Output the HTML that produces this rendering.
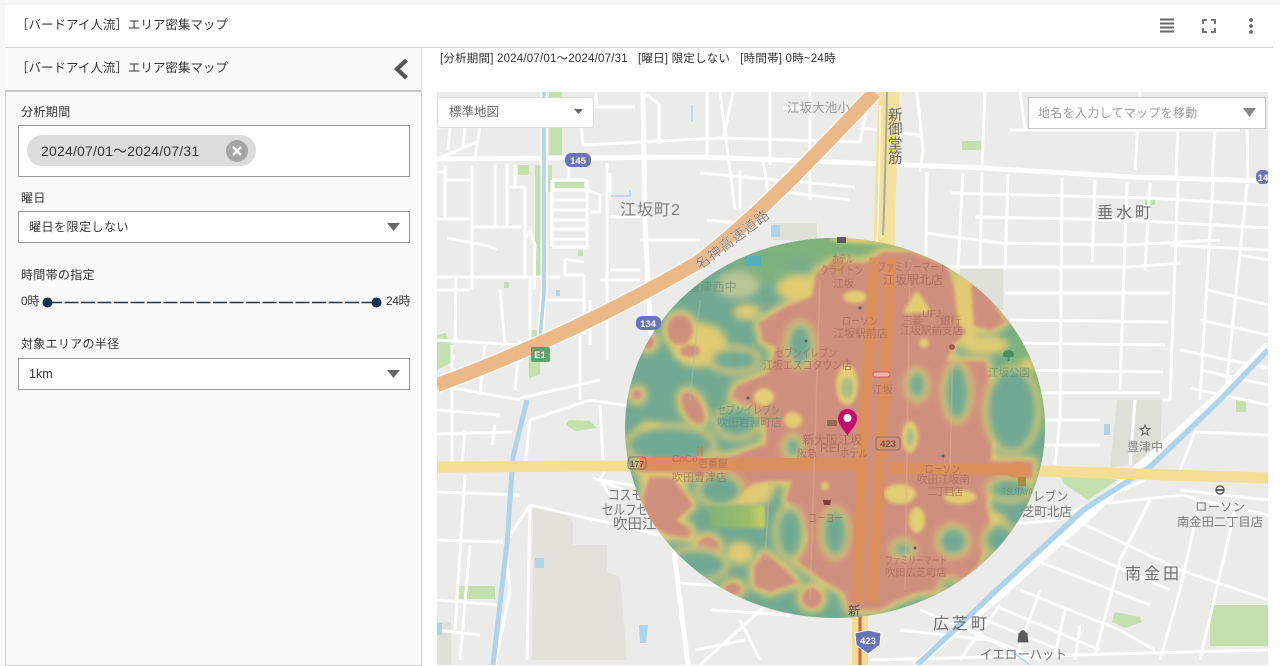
<!DOCTYPE html>
<html lang="ja"><head><meta charset="utf-8"><title>エリア密集マップ</title>
<style>
*{box-sizing:border-box}
html,body{margin:0;padding:0;width:1280px;height:666px;overflow:hidden;background:#fff;font-family:"Liberation Sans","Noto Sans CJK JP",sans-serif;color:#333}
.a{position:absolute}
.t{position:absolute;white-space:nowrap;line-height:16px}
.sel{position:absolute;left:18px;width:392px;background:#fff;border:1px solid #9a9a9a}
svg text{font-family:"Liberation Sans","Noto Sans CJK JP",sans-serif}
</style></head><body>
<div class="a" style="left:0;top:0;width:1280px;height:5px;background:#f6f6f6"></div>
<div class="a" style="left:0;top:5px;width:5px;height:661px;background:#f8f8f8"></div>
<div class="a" style="left:5px;top:47px;width:1268px;height:1px;background:#d2d2d2"></div>
<div class="t" style="left:16px;top:17px;font-size:12.500px;color:#333">［バードアイ人流］エリア密集マップ</div>
<!-- top icons -->
<svg class="a" style="left:1150px;top:10px" width="110" height="30" viewBox="1150 10 110 30">
<path d="M1160 19.500h14M1160 23.500h14M1160 27.500h14M1160 31.500h14" stroke="#666" stroke-width="2" fill="none"/>
<path d="M1203 24v-4h4M1211 20h4v4M1215 28v4h-4M1207 32h-4v-4" stroke="#666" stroke-width="1.800" fill="none"/>
<circle cx="1251" cy="20" r="1.900" fill="#666"/><circle cx="1251" cy="26" r="1.900" fill="#666"/><circle cx="1251" cy="32" r="1.900" fill="#666"/>
</svg>
<!-- left panel -->
<div class="a" style="left:5px;top:48px;width:416px;height:43px;background:#fafafa;border-bottom:1px solid #c8c8c8"></div>
<div class="a" style="left:5px;top:91px;width:417px;height:575px;background:#fafafa;border:1px solid #cfcfcf;border-top:1px solid #c8c8c8"></div>
<div class="a" style="left:421px;top:48px;width:1px;height:44px;background:#e2e2e2"></div>
<div class="t" style="left:16px;top:60px;font-size:12.500px">［バードアイ人流］エリア密集マップ</div>
<svg class="a" style="left:390px;top:55px" width="24" height="28"><path d="M16.500 5L7 14l9.500 9" stroke="#555" stroke-width="4.200" fill="none"/></svg>
<div class="t" style="left:21px;top:104px;font-size:12px;letter-spacing:.4px">分析期間</div>
<div class="sel" style="top:125px;height:52px"></div>
<div class="a" style="left:27px;top:135px;width:229px;height:31px;border-radius:16px;background:#dcdcdc"></div>
<div class="t" style="left:41px;top:143px;font-size:14px;color:#333;letter-spacing:.2px">2024/07/01～2024/07/31</div>
<svg class="a" style="left:226px;top:140px" width="22" height="22"><circle cx="11" cy="11" r="11" fill="#a5a5a5"/><path d="M7 7l8 8M15 7l-8 8" stroke="#fff" stroke-width="2.400"/></svg>
<div class="t" style="left:21px;top:190px;font-size:12px;letter-spacing:.4px">曜日</div>
<div class="sel" style="top:211px;height:32px"></div>
<div class="t" style="left:29px;top:219px;font-size:12px;letter-spacing:.5px">曜日を限定しない</div>
<svg class="a" style="left:386px;top:222px" width="16" height="10"><path d="M1 1h13l-6.500 8z" fill="#666"/></svg>
<div class="t" style="left:21px;top:267px;font-size:12px;letter-spacing:.3px">時間帯の指定</div>
<div class="t" style="left:21px;top:293px;font-size:12px;letter-spacing:-.3px">0時</div>
<div class="t" style="left:386px;top:293px;font-size:12px;letter-spacing:-.4px">24時</div>
<svg class="a" style="left:40px;top:294px" width="345" height="16"><path d="M8 8.500H337" stroke="#1b3655" stroke-width="1.500" stroke-dasharray="14 2.500"/><circle cx="7.500" cy="8.500" r="5" fill="#14304f"/><circle cx="336.500" cy="8.500" r="5" fill="#14304f"/></svg>
<div class="t" style="left:21px;top:336px;font-size:12px;letter-spacing:.3px">対象エリアの半径</div>
<div class="sel" style="top:358px;height:32px"></div>
<div class="t" style="left:29px;top:366px;font-size:12.500px">1km</div>
<svg class="a" style="left:386px;top:369px" width="16" height="10"><path d="M1 1h13l-6.500 8z" fill="#666"/></svg>
<!-- summary -->
<div class="t" style="left:440px;top:51px;font-size:11.500px;color:#333;letter-spacing:.2px">[分析期間] 2024/07/01～2024/07/31 &nbsp; [曜日] 限定しない &nbsp; [時間帯] 0時~24時</div>
<!-- map -->
<svg class="a" style="left:437px;top:92px" width="831" height="573" viewBox="437 92 831 573">
<defs>
<filter id="b1" x="-20%" y="-20%" width="140%" height="140%"><feGaussianBlur stdDeviation="1.800"/></filter>
<filter id="b4" x="-20%" y="-20%" width="140%" height="140%"><feGaussianBlur stdDeviation="4"/></filter>
<filter id="b7" x="-20%" y="-20%" width="140%" height="140%"><feGaussianBlur stdDeviation="8"/></filter>
<filter id="bm" x="-5%" y="-5%" width="110%" height="110%"><feGaussianBlur stdDeviation=".35"/></filter>
<clipPath id="c"><ellipse cx="835" cy="428" rx="210" ry="190"/></clipPath>
<linearGradient id="gg" x1="0" x2="1"><stop offset="0" stop-color="#80b478"/><stop offset=".7" stop-color="#9cbd68"/><stop offset="1" stop-color="#cfd25f"/></linearGradient>
<g id="hot">
<path d="M817 273 833 263 867 263 883 253 913 253 947 267 953 287 957 323 965 332 952 345 945 362 985 362 993 400 992 440 990 462 1032 462 1032 478 990 482 985 505 990 525 978 565 960 582 930 590 915 592 895 600 880 609 850 609 845 592 820 577 797 560 808 540 803 520 787 500 793 480 772 480 752 483 735 497 715 478 690 472 640 471 640 457 730 458 767 445 767 427 733 397 737 387 770 373 777 347 763 340 760 323 787 307 813 297z"/>
<path d="M650 478 672 478 692 505 675 520 690 530 688 537 668 534 645 520 644 498z"/>
<path d="M972 285 985 290 1004 322 990 329 975 325z"/>
<path d="M755 567 765 554 785 570 796 582 770 591 755 585z"/>
<ellipse cx="693" cy="408" rx="8" ry="17" transform="rotate(-28 693 408)"/>
<ellipse cx="680" cy="330" rx="12" ry="14"/>
<ellipse cx="690" cy="351" rx="9" ry="5"/>
<ellipse cx="648" cy="342" rx="5" ry="6"/>
<ellipse cx="637" cy="395" rx="4" ry="4"/>
<ellipse cx="708" cy="547" rx="10" ry="9"/>
<ellipse cx="812" cy="598" rx="9" ry="9"/>
<ellipse cx="733" cy="589" rx="7" ry="5"/>
</g>
<g id="cold">
<ellipse cx="800" cy="345" rx="11" ry="20"/>
<ellipse cx="917" cy="385" rx="8" ry="13"/>
<ellipse cx="957" cy="392" rx="11" ry="27"/>
<ellipse cx="835" cy="533" rx="11" ry="22"/>
<ellipse cx="790" cy="533" rx="12" ry="24"/>
<ellipse cx="953" cy="541" rx="13" ry="13"/>
<ellipse cx="903" cy="549" rx="9" ry="6"/>
<ellipse cx="793" cy="447" rx="7" ry="9"/>
<ellipse cx="1010" cy="489" rx="20" ry="9"/>
<ellipse cx="1012" cy="410" rx="24" ry="40"/>
<ellipse cx="720" cy="490" rx="20" ry="14"/>
<ellipse cx="670" cy="445" rx="42" ry="17"/>
<ellipse cx="737" cy="422" rx="20" ry="14"/>
<ellipse cx="735" cy="360" rx="22" ry="10"/>
<ellipse cx="1000" cy="540" rx="14" ry="14"/>
<ellipse cx="950" cy="586" rx="8" ry="5"/>
<ellipse cx="695" cy="565" rx="30" ry="14"/>
</g>
</defs>
<rect x="437" y="92" width="831" height="573" fill="#ebebe9"/>
<g filter="url(#bm)">
<!-- tan blocks -->
<path d="M533 507 565 510 573 523 573 545 607 545 607 572 620 577 627 660 532 660z" fill="#e2e2da"/>
<path d="M1117 400 1162 400 1160 460 1110 468z" fill="#dedfd6"/>
<path d="M960 268H1003V310H960zM773 223H817V240H773zM437 622H451V665H437z" fill="#dfe0d8"/>
<!-- green -->
<g fill="#c3e0ad">
<path d="M549 92H562V155H549zM535 165H541V279H535zM548 165H552V192H548z"/>
<rect x="555" y="182" width="29" height="6"/><rect x="518" y="165" width="11" height="10"/><rect x="578" y="250" width="5" height="6"/><rect x="504" y="282" width="5" height="6"/>
<path d="M528 330 541 330 540 375 529 378zM437 335 445 333 455 350 452 362 437 370z"/>
<path d="M457 586H495V599H457zM569 420 590 421 597 428 575 431 566 425zM1058 468 1117 480 1088 500 1063 483zM1115 612 1140 617 1142 622 1125 628 1112 622zM1236 400H1246V412H1236zM962 141H981V150H962zM1145 200H1155V205H1145z"/>
<path d="M1210 605H1268V646H1210z"/>
</g>
<g fill="none" stroke="#fff" stroke-width="3" stroke-linejoin="round">
<!-- thick -->
<path d="M437 159 700 157 860 163 983 168 1133 177 1268 181" stroke-width="5"/>
<path d="M643 92 645 223 650 320 652 350" stroke-width="5"/>
<path d="M581 125 583 145 720 138 860 142"/>
<!-- left top detailed -->
<path d="M552 180H587M552 190H587M552 200H587M552 210H587M552 220H587M552 229H587M552 239H587M552 247H587M552 180V247M587 180V247M569 164V180"/>
<path d="M607 163V360M495 164V226M507 164V226M515 164V185M525 187V277M509 187H525M437 219H470M472 227H522M472 165V290M445 180H470M445 165V219M447 238 488 246 498 250M437 277H560M437 290H470M437 172H446"/>
<path d="M480 127 475 159M437 159 477 142M437 127 480 125M450 127 448 150M465 127 463 147"/>
<path d="M594 107H635M596 92V105M642 92 659 104 659 144M610 173V200M610 217H640M610 270H640M565 259V275H584M565 259 584 262M587 190 600 195 600 212 590 212M530 230 535 245 534 290M525 240 530 230"/>
<path d="M437 340 520 345M505 345 500 290M456 277 455 340M470 375 452 375M485 345 480 395M520 340 515 390M452 345 452 465M530 277V345M545 300 585 300M584 275V335M590 300 590 345M600 280H640"/>
<path d="M720 92 735 210M770 92 770 165M707 92 707 160M810 92 810 200M740 170 740 210M640 240 700 240"/>
<path d="M763 160 770 205M700 173 855 187M707 220 760 225M770 190 850 200M723 140 733 92M860 142 870 95M783 108 812 108"/>
<!-- right grid verticals -->
<path d="M927 172 925 320M963 173 958 270M982 172 980 265M1008 175 1005 270M1062 178 1060 420 1055 465M1127 182 1120 390M1150 183 1145 270M1178 182 1170 400 1163 400M1213 182 1200 400M1247 184 1225 400M1095 180 1092 262"/>
<path d="M917 92 923 150 920 172M985 92 982 165M1020 92 1025 130M1140 92 1135 170M1178 128 1176 178M1215 128 1212 178M1247 128 1248 180M1010 130 1240 130M860 128 920 135"/>
<path d="M950 193 1150 198 1268 205M975 217 1125 220 1268 228M925 233 1000 243 1127 245 1220 240M930 267 1130 267 1180 263M1005 293 1170 293M1010 320 1168 322M1005 343 1165 345M1003 370 1163 372M1005 393 1160 393M1170 245 1268 250M1240 255 1268 260M1208 290 1268 305M1200 320 1268 335M1180 350 1268 368M1200 370 1268 385M1190 388 1268 405"/>
<!-- right lower -->
<path d="M1005 420 1100 420M1040 445 1100 445M1002 465 1040 470M1135 400 1130 465M1268 435 1195 432 1180 470M1180 490 1268 500"/>
<path d="M1090 505 1183 495 1200 500 1268 515M1075 520 1180 570 1268 600M1060 542 1170 590M1040 562 1150 605M1020 590 1120 630 1155 650M1000 608 1100 650M985 620 1060 650M1100 500 1145 480M1150 500 1120 560 1095 655M1200 500 1180 590 1160 660M1235 510 1200 660M1000 605 960 660M1040 590 1015 660M1065 610 1055 655M1080 625 1075 660M900 630 990 640 1030 660M870 660 1268 650M920 610 1040 660"/>
<path d="M915 665 1000 595 1095 510 1130 475 1220 395 1268 345" stroke-width="8"/>
<path d="M1000 525 1060 520 1085 505"/>
<!-- left lower -->
<path d="M437 434 512 432M437 492 520 495M437 540 503 542M437 600 500 605M437 630 480 635M465 430 462 465M465 475 455 630M470 545 460 660M505 543 510 590 495 665M530 505 505 543M530 505 527 660M530 505 640 530 700 545M665 490 600 480 605 470M600 480 610 495M593 478 700 520"/>
<path d="M667 480 675 560 688 665" stroke-width="5"/>
<path d="M677 583 780 590M710 610 790 615M783 590 700 665M740 620 760 660M695 650 745 640M495 425 492 445M530 420 590 400 670 412M520 398 600 380M600 405 603 460M437 410 500 415M530 420 525 465"/>
<path d="M437 385 520 400M580 330 580 400"/>
</g>
<!-- canals -->
<path d="M544 92V292 L540 340" stroke="#fff" stroke-width="7" fill="none"/>
<g fill="none" stroke="#aed4ec" stroke-linejoin="round">
<path d="M544 92V292 L540 340" stroke-width="3.500"/>
<path d="M527 400 513 457 507 543 493 665" stroke-width="5"/>
<path d="M917 665 1000 587 1083 510 1150 467 1220 400 1268 350" stroke-width="5.500"/>
<path d="M611 196H630V190" stroke-width="1.500"/>
<path d="M692 105V122" stroke-width="1.500"/>
<path d="M1010 650 1030 665" stroke-width="1.500"/>
</g>
<g fill="#aed4ec">
<rect x="556" y="290" width="4" height="6"/><rect x="535" y="558" width="9" height="10"/><path d="M639 625H648L646 643H640z"/><rect x="1104" y="424" width="6" height="11"/><rect x="437" y="623" width="5" height="12"/><rect x="771" y="225" width="9" height="12"/>
</g>
<!-- main roads -->
<path d="M437 467 640 466 900 467 1040 471 1268 478" stroke="#f5dd93" stroke-width="11" fill="none"/>
<path d="M889 92 C887 140 885 190 884 260" stroke="#f4e29b" stroke-width="21" fill="none"/>
<path d="M887 92 C886 140 885 190 883 235" stroke="#a8a8a4" stroke-width="2" fill="none"/>
<path d="M880 105 C880 135 879 190 877 250" stroke="#fff" stroke-width="1.500" fill="none" opacity=".8"/>
<path d="M860 610V666" stroke="#f4dc95" stroke-width="16"/>
<path d="M860 610V666" stroke="#d8603f" stroke-width="3"/>
<path d="M437 385C500 362 590 325 697 263C760 215 820 150 875 92" stroke="#fff" stroke-width="17" fill="none" opacity=".7"/>
<path d="M437 385C500 362 590 325 697 263C760 215 820 150 875 92" stroke="#ebb988" stroke-width="14" fill="none"/>
</g>
<!-- map labels -->
<g fill="#777" font-size="12" lengthAdjust="spacingAndGlyphs">
<text x="787" y="112" font-size="12.500" fill="#999" textLength="63">江坂大池小</text>
<text x="620" y="215" font-size="16" letter-spacing="1" fill="#7f7f7f">江坂町2</text>
<text x="1097" y="218" font-size="16" letter-spacing="3" fill="#6f6f6f">垂水町</text>
<text x="1127" y="451" fill="#888">豊津中</text>
<text x="1195" y="511" textLength="50" lengthAdjust="spacingAndGlyphs">ローソン</text>
<text x="1177" y="526" textLength="86" lengthAdjust="spacingAndGlyphs">南金田二丁目店</text>
<text x="1125" y="579" font-size="16" letter-spacing="3" fill="#6f6f6f">南金田</text>
<text x="933" y="629" font-size="16" letter-spacing="3" fill="#6f6f6f">広芝町</text>
<text x="980" y="659" font-size="13" textLength="87" lengthAdjust="spacingAndGlyphs">イエローハット</text>
<text x="608" y="500" font-size="14" textLength="35" lengthAdjust="spacingAndGlyphs">コスモ</text>
<text x="602" y="515" font-size="14" textLength="46" lengthAdjust="spacingAndGlyphs">セルフセ</text>
<text x="613" y="529" font-size="14.500">吹田江</text>
<text x="1033" y="501" font-size="13" textLength="35" lengthAdjust="spacingAndGlyphs">レブン</text>
<text x="1022" y="516" font-size="12.500">芝町北店</text>
<g font-size="14.500" fill="#666">
<text x="888" y="120">新</text><text x="888" y="134">御</text><text x="888" y="149">堂</text><text x="888" y="163">筋</text>
</g>
<text transform="translate(700 270) rotate(-37)" font-size="14" fill="#666" stroke="#f6f6f4" stroke-width=".25" textLength="88">名神高速道路</text>
</g>
<!-- heat -->
<g clip-path="url(#c)">
<ellipse cx="835" cy="428" rx="212" ry="192" fill="#71a992"/>
<ellipse cx="850" cy="235" rx="120" ry="30" fill="#7fb27a" filter="url(#b7)"/>
<ellipse cx="1035" cy="370" rx="30" ry="60" fill="#7fb27a" filter="url(#b7)"/>
<ellipse cx="760" cy="270" rx="35" ry="14" fill="#7fb27a" filter="url(#b7)"/>
<rect x="745" y="256" width="16" height="10" fill="#56aebb"/>
<ellipse cx="738" cy="285" rx="22" ry="14" fill="#b8c596" filter="url(#b4)"/>
<!-- yellow-only -->
<g fill="#e2cb72" filter="url(#b4)">
<ellipse cx="965" cy="305" rx="18" ry="38"/><ellipse cx="985" cy="345" rx="24" ry="10"/>
<ellipse cx="800" cy="288" rx="24" ry="14"/><ellipse cx="747" cy="312" rx="14" ry="8"/><ellipse cx="700" cy="345" rx="28" ry="22"/>
<ellipse cx="750" cy="490" rx="24" ry="17"/><ellipse cx="740" cy="553" rx="14" ry="12"/><ellipse cx="985" cy="520" rx="22" ry="8"/>
<ellipse cx="1028" cy="365" rx="8" ry="7"/><ellipse cx="660" cy="535" rx="12" ry="7"/><ellipse cx="650" cy="430" rx="12" ry="8"/>
<ellipse cx="665" cy="480" rx="25" ry="10"/>
</g>
<use href="#hot" fill="#e2cb72" stroke="#e2cb72" stroke-width="12" stroke-linejoin="round" filter="url(#b4)"/>
<use href="#hot" fill="#cf8f7d" stroke="#cf8f7d" stroke-width="2" stroke-linejoin="round" filter="url(#b1)"/>
<use href="#cold" fill="#e2cb72" stroke="#e2cb72" stroke-width="9" filter="url(#b4)"/>
<use href="#cold" fill="#6fa993" filter="url(#b4)"/>
<rect x="709" y="506" width="56" height="22" fill="url(#gg)" filter="url(#b1)"/>
<!-- yellow spots -->
<g fill="#e3cd72" filter="url(#b1)">
<ellipse cx="855" cy="297" rx="12" ry="6"/><path d="M917 294 927 310 907 311z" stroke="#e3cd72" stroke-width="5" stroke-linejoin="round"/>
<ellipse cx="924" cy="343" rx="5" ry="5"/><ellipse cx="847" cy="385" rx="11" ry="20"/><ellipse cx="764" cy="397" rx="10" ry="9"/>
<ellipse cx="793" cy="420" rx="9" ry="8"/><ellipse cx="910" cy="437" rx="8" ry="16"/><ellipse cx="900" cy="494" rx="16" ry="10"/>
<ellipse cx="917" cy="520" rx="8" ry="13"/><ellipse cx="960" cy="497" rx="16" ry="7"/><ellipse cx="825" cy="486" rx="4" ry="4"/>
<ellipse cx="860" cy="448" rx="4" ry="5"/><ellipse cx="880" cy="240" rx="50" ry="4" opacity=".9"/>
</g>
<ellipse cx="847" cy="388" rx="6" ry="10" fill="#a5bf82" filter="url(#b1)"/>
<ellipse cx="910" cy="437" rx="4" ry="9" fill="#a5bf82" filter="url(#b1)"/>
<ellipse cx="838" cy="266" rx="8" ry="9" fill="#c99568" filter="url(#b1)"/>
<!-- orange roads in heat -->
<g fill="none" stroke="#db8f5a">
<path d="M640 464H858" stroke-width="12"/>
<path d="M890 468 1028 470" stroke-width="11"/>
<ellipse cx="1018" cy="470" rx="12" ry="8" fill="#db8f5a" stroke="none"/>
<path d="M875 258 862 450 858 603" stroke-width="11"/>
<path d="M891 258 881 450 872 603" stroke-width="11"/>
</g>
<g fill="none" stroke="#e5ac92" stroke-width="1.500" opacity=".5">
<path d="M820 280 810 600"/><path d="M770 480 765 560"/><path d="M910 260 905 590"/><path d="M953 340 950 470"/>
<path d="M700 300 690 400" stroke="#9dc4ae"/>
</g>
<!-- labels over heat -->
<g fill="#a0685a" font-size="11.500" opacity=".7">
<text x="832" y="263" textLength="21" lengthAdjust="spacingAndGlyphs">ホテル</text>
<text x="820" y="274" textLength="43" lengthAdjust="spacingAndGlyphs">クライトン</text>
<text x="833" y="281" opacity="0"></text>
<text x="833" y="287" font-size="10.500">江坂</text>
<text x="877" y="271" font-size="12" textLength="71" lengthAdjust="spacingAndGlyphs">ファミリーマート</text>
<text x="883" y="284" font-size="12">江坂駅北店</text>
<text x="842" y="325" textLength="36" lengthAdjust="spacingAndGlyphs">ローソン</text>
<text x="833" y="337" font-size="11">江坂駅前店</text>
<text x="902" y="324" font-size="10.500">三菱</text>
<text x="922" y="317" font-size="10.500">UFJ</text><text x="940" y="324" font-size="10.500">銀行</text>
<text x="900" y="334" font-size="10.500">江坂駅前支店</text>
<text x="775" y="357" textLength="62" lengthAdjust="spacingAndGlyphs">セブンイレブン</text>
<text x="763" y="369" textLength="89" lengthAdjust="spacingAndGlyphs">江坂エスコタウン店</text>
<text x="872" y="393" font-size="10.500">江坂</text>
<text x="988" y="376" font-size="10.500" fill="#5d8a70">江坂公園</text>
<text x="717" y="414" fill="#5d8a78" textLength="63" lengthAdjust="spacingAndGlyphs">セブンイレブン</text>
<text x="717" y="426" fill="#5d8a78" font-size="10.800">吹田岩淵町店</text>
<text x="802" y="444" font-size="12">新大阪江坂</text>
<text x="797" y="457" font-size="10">阪急</text><text x="820" y="452" font-size="12">REI</text><text x="840" y="457" textLength="28" lengthAdjust="spacingAndGlyphs">ホテル</text>
<text x="672" y="462" font-size="10">CoCo</text>
<text x="698" y="467" font-size="10">壱番屋</text>
<text x="672" y="481" font-size="11">吹田豊津店</text>
<text x="808" y="522" textLength="35" lengthAdjust="spacingAndGlyphs">コーヨー</text>
<text x="925" y="473" textLength="35" lengthAdjust="spacingAndGlyphs">ローソン</text>
<text x="917" y="483" font-size="10.600">吹田江坂南</text>
<text x="927" y="495" font-size="10.500" textLength="36">二丁目店</text>
<text x="1002" y="495" font-size="10" fill="#5d8a78" textLength="31" lengthAdjust="spacingAndGlyphs">TSUTAYA</text>
<text x="885" y="564" font-size="11" textLength="62" lengthAdjust="spacingAndGlyphs">ファミリーマート</text>
<text x="885" y="576" font-size="10.300">吹田広芝町店</text>
<text x="688" y="291" font-size="12.200" fill="#6d8a74">豊津西中</text>
</g>
</g>
<text x="848" y="615" font-size="12" fill="#555">新</text>
<!-- badges -->
<g font-size="9.500" font-weight="bold" fill="#fff" text-anchor="middle">
<rect x="565" y="153" width="26" height="14" rx="6" fill="#6b74b9"/><text x="578" y="164">145</text>
<rect x="636" y="316" width="25" height="14" rx="6" fill="#6b74b9"/><text x="648" y="327">134</text>
<rect x="531" y="347" width="19" height="15" rx="2" fill="#5aa56b"/><text x="540" y="358">E1</text>
<rect x="1256" y="170" width="14" height="14" rx="6" fill="#6b74b9"/><text x="1263" y="181">14</text>
<path d="M855 633 868 630 881 633 880 645 868 654 856 645z" fill="#6b74b9" stroke="#fff"/><text x="868" y="644">423</text>
</g>
<g fill="none" stroke="#8f6f60" stroke-width="1">
<rect x="876" y="437" width="24" height="13" rx="3"/><rect x="628" y="457" width="18" height="12" rx="3"/>
</g>
<text x="888" y="447" font-size="9.500" font-weight="bold" fill="#74574b" text-anchor="middle">423</text>
<text x="637" y="467" font-size="8.500" font-weight="bold" fill="#74574b" text-anchor="middle">177</text>
<!-- small pins -->
<g fill="#5c5c5c">
<path d="M1019 633h8l1 9h-10zM1020.500 633a2.500 2.500 0 0 1 5 0" stroke="#5c5c5c" stroke-width=".8"/>
<circle cx="1220" cy="490" r="4" fill="none" stroke="#5c5c5c" stroke-width="1.500"/><rect x="1216" y="489" width="8" height="2"/>
<path d="M1145 425l1.500 3.500h3.500l-3 2.500 1 4-3-2-3 2 1-4-3-2.500h3.500z" fill="none" stroke="#5c5c5c"/>
<rect x="837" y="237" width="9" height="6"/><rect x="827" y="420" width="10" height="6" fill="#9a6b55"/>
<circle cx="860" cy="308" r="1.500"/><circle cx="806" cy="341" r="1.500"/><circle cx="748" cy="398" r="1.500"/><circle cx="943" cy="456" r="1.500"/><circle cx="915" cy="548" r="1.500"/>
</g>
<path d="M1008.500 350c-5 0-7 5-4.500 7h3.500v4h2v-4h3.500c2.500-2 .5-7-4.500-7z" fill="#43915c"/>
<path d="M823 500h8l-1 5h-6z" fill="#7c3f3a"/>
<path d="M698 456v-10M702 456v-10" stroke="#c77a3a" stroke-width="1.500"/>
<circle cx="952" cy="347" r="3" fill="#a4614a"/>
<path d="M1018 477h8v9h-8z" fill="#a78a3f"/>
<rect x="873" y="372" width="17" height="5" rx="2.500" fill="#e9b8a8" stroke="#d25a5a"/>
<!-- marker -->
<path d="M847.500 435.500C843 429 838 424 838 418.500a9.500 9.500 0 0 1 19 0C857 424 852 429 847.500 435.500z" fill="#c40c6e"/>
<circle cx="847.500" cy="418" r="4" fill="#fff"/>
</svg>
<!-- white band under map -->
<div class="a" style="left:437px;top:665px;width:831px;height:1px;background:#fff"></div>
<!-- map controls -->
<div class="a" style="left:437px;top:97px;width:157px;height:31px;background:#fff;border:1px solid #dcdcdc;border-radius:3px"></div>
<div class="t" style="left:449px;top:104px;font-size:12.500px;color:#666">標準地図</div>
<svg class="a" style="left:574px;top:109px" width="10" height="6"><path d="M0 0h9l-4.500 5z" fill="#666"/></svg>
<div class="a" style="left:1028px;top:97px;width:238px;height:32px;background:#fff;border:1px solid #c9c9c9"></div>
<div class="t" style="left:1038px;top:105px;font-size:12px;color:#999;letter-spacing:.3px">地名を入力してマップを移動</div>
<svg class="a" style="left:1242px;top:108px" width="15" height="10"><path d="M1 0h13l-6.500 9z" fill="#888"/></svg>
</body></html>
